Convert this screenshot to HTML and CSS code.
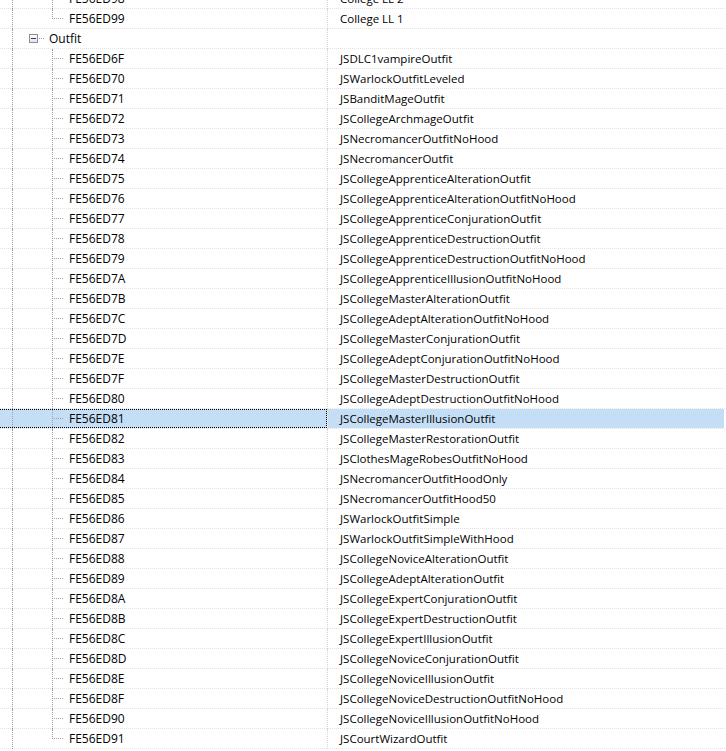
FILE: index.html
```html
<!DOCTYPE html>
<html>
<head>
<meta charset="utf-8">
<link rel="stylesheet" href="styles.css">
</head>
<body>
<div class="tree">
  <div class="row"><div class="c1"><i class="g"></i><i class="s"></i><i class="t"></i><span class="id">FE56ED98</span></div><div class="c2">College LL 2</div></div>
  <div class="row"><div class="c1"><i class="g"></i><i class="s"></i><i class="t l"></i><span class="id">FE56ED99</span></div><div class="c2">College LL 1</div></div>
  <div class="row"><div class="c1"><i class="g"></i><i class="b"><b class="box"></b></i><span class="grp">Outfit</span></div><div class="c2"></div></div>
  <div class="row"><div class="c1"><i class="g"></i><i class="s"></i><i class="t"></i><span class="id">FE56ED6F</span></div><div class="c2">JSDLC1vampireOutfit</div></div>
  <div class="row"><div class="c1"><i class="g"></i><i class="s"></i><i class="t"></i><span class="id">FE56ED70</span></div><div class="c2">JSWarlockOutfitLeveled</div></div>
  <div class="row"><div class="c1"><i class="g"></i><i class="s"></i><i class="t"></i><span class="id">FE56ED71</span></div><div class="c2">JSBanditMageOutfit</div></div>
  <div class="row"><div class="c1"><i class="g"></i><i class="s"></i><i class="t"></i><span class="id">FE56ED72</span></div><div class="c2">JSCollegeArchmageOutfit</div></div>
  <div class="row"><div class="c1"><i class="g"></i><i class="s"></i><i class="t"></i><span class="id">FE56ED73</span></div><div class="c2">JSNecromancerOutfitNoHood</div></div>
  <div class="row"><div class="c1"><i class="g"></i><i class="s"></i><i class="t"></i><span class="id">FE56ED74</span></div><div class="c2">JSNecromancerOutfit</div></div>
  <div class="row"><div class="c1"><i class="g"></i><i class="s"></i><i class="t"></i><span class="id">FE56ED75</span></div><div class="c2">JSCollegeApprenticeAlterationOutfit</div></div>
  <div class="row"><div class="c1"><i class="g"></i><i class="s"></i><i class="t"></i><span class="id">FE56ED76</span></div><div class="c2">JSCollegeApprenticeAlterationOutfitNoHood</div></div>
  <div class="row"><div class="c1"><i class="g"></i><i class="s"></i><i class="t"></i><span class="id">FE56ED77</span></div><div class="c2">JSCollegeApprenticeConjurationOutfit</div></div>
  <div class="row"><div class="c1"><i class="g"></i><i class="s"></i><i class="t"></i><span class="id">FE56ED78</span></div><div class="c2">JSCollegeApprenticeDestructionOutfit</div></div>
  <div class="row"><div class="c1"><i class="g"></i><i class="s"></i><i class="t"></i><span class="id">FE56ED79</span></div><div class="c2">JSCollegeApprenticeDestructionOutfitNoHood</div></div>
  <div class="row"><div class="c1"><i class="g"></i><i class="s"></i><i class="t"></i><span class="id">FE56ED7A</span></div><div class="c2">JSCollegeApprenticeIllusionOutfitNoHood</div></div>
  <div class="row"><div class="c1"><i class="g"></i><i class="s"></i><i class="t"></i><span class="id">FE56ED7B</span></div><div class="c2">JSCollegeMasterAlterationOutfit</div></div>
  <div class="row"><div class="c1"><i class="g"></i><i class="s"></i><i class="t"></i><span class="id">FE56ED7C</span></div><div class="c2">JSCollegeAdeptAlterationOutfitNoHood</div></div>
  <div class="row"><div class="c1"><i class="g"></i><i class="s"></i><i class="t"></i><span class="id">FE56ED7D</span></div><div class="c2">JSCollegeMasterConjurationOutfit</div></div>
  <div class="row"><div class="c1"><i class="g"></i><i class="s"></i><i class="t"></i><span class="id">FE56ED7E</span></div><div class="c2">JSCollegeAdeptConjurationOutfitNoHood</div></div>
  <div class="row"><div class="c1"><i class="g"></i><i class="s"></i><i class="t"></i><span class="id">FE56ED7F</span></div><div class="c2">JSCollegeMasterDestructionOutfit</div></div>
  <div class="row"><div class="c1"><i class="g"></i><i class="s"></i><i class="t"></i><span class="id">FE56ED80</span></div><div class="c2">JSCollegeAdeptDestructionOutfitNoHood</div></div>
  <div class="row sel"><div class="c1"><i class="g"></i><i class="s"></i><i class="t"></i><span class="id">FE56ED81</span></div><div class="c2">JSCollegeMasterIllusionOutfit</div></div>
  <div class="row"><div class="c1"><i class="g"></i><i class="s"></i><i class="t"></i><span class="id">FE56ED82</span></div><div class="c2">JSCollegeMasterRestorationOutfit</div></div>
  <div class="row"><div class="c1"><i class="g"></i><i class="s"></i><i class="t"></i><span class="id">FE56ED83</span></div><div class="c2">JSClothesMageRobesOutfitNoHood</div></div>
  <div class="row"><div class="c1"><i class="g"></i><i class="s"></i><i class="t"></i><span class="id">FE56ED84</span></div><div class="c2">JSNecromancerOutfitHoodOnly</div></div>
  <div class="row"><div class="c1"><i class="g"></i><i class="s"></i><i class="t"></i><span class="id">FE56ED85</span></div><div class="c2">JSNecromancerOutfitHood50</div></div>
  <div class="row"><div class="c1"><i class="g"></i><i class="s"></i><i class="t"></i><span class="id">FE56ED86</span></div><div class="c2">JSWarlockOutfitSimple</div></div>
  <div class="row"><div class="c1"><i class="g"></i><i class="s"></i><i class="t"></i><span class="id">FE56ED87</span></div><div class="c2">JSWarlockOutfitSimpleWithHood</div></div>
  <div class="row"><div class="c1"><i class="g"></i><i class="s"></i><i class="t"></i><span class="id">FE56ED88</span></div><div class="c2">JSCollegeNoviceAlterationOutfit</div></div>
  <div class="row"><div class="c1"><i class="g"></i><i class="s"></i><i class="t"></i><span class="id">FE56ED89</span></div><div class="c2">JSCollegeAdeptAlterationOutfit</div></div>
  <div class="row"><div class="c1"><i class="g"></i><i class="s"></i><i class="t"></i><span class="id">FE56ED8A</span></div><div class="c2">JSCollegeExpertConjurationOutfit</div></div>
  <div class="row"><div class="c1"><i class="g"></i><i class="s"></i><i class="t"></i><span class="id">FE56ED8B</span></div><div class="c2">JSCollegeExpertDestructionOutfit</div></div>
  <div class="row"><div class="c1"><i class="g"></i><i class="s"></i><i class="t"></i><span class="id">FE56ED8C</span></div><div class="c2">JSCollegeExpertIllusionOutfit</div></div>
  <div class="row"><div class="c1"><i class="g"></i><i class="s"></i><i class="t"></i><span class="id">FE56ED8D</span></div><div class="c2">JSCollegeNoviceConjurationOutfit</div></div>
  <div class="row"><div class="c1"><i class="g"></i><i class="s"></i><i class="t"></i><span class="id">FE56ED8E</span></div><div class="c2">JSCollegeNoviceIllusionOutfit</div></div>
  <div class="row"><div class="c1"><i class="g"></i><i class="s"></i><i class="t"></i><span class="id">FE56ED8F</span></div><div class="c2">JSCollegeNoviceDestructionOutfitNoHood</div></div>
  <div class="row"><div class="c1"><i class="g"></i><i class="s"></i><i class="t"></i><span class="id">FE56ED90</span></div><div class="c2">JSCollegeNoviceIllusionOutfitNoHood</div></div>
  <div class="row"><div class="c1"><i class="g"></i><i class="s"></i><i class="t l"></i><span class="id">FE56ED91</span></div><div class="c2">JSCourtWizardOutfit</div></div>
</div>
</body>
</html>
```
FILE: styles.css
```css
html, body {
  margin: 0;
  padding: 0;
  background: #ffffff;
  overflow: hidden;
}

.tree {
  margin-top: -11px;
  width: 726px;
  font-family: "Open Sans", "Noto Sans", sans-serif;
  font-size: 12px;
  color: #000000;
}

.row {
  display: flex;
  height: 20px;
  background-image: repeating-linear-gradient(to right, #e3e3e3 0 1px, transparent 1px 2px);
  background-position: 0 19px;
  background-size: 100% 1px;
  background-repeat: no-repeat;
}

.c1 {
  position: relative;
  flex: none;
  width: 327px;
  height: 20px;
  box-sizing: border-box;
  padding-left: 2px;
  display: flex;
  align-items: flex-start;
}

.c2 {
  flex: 1;
  height: 20px;
  box-sizing: border-box;
  border-left: 1px dotted #d6d6d6;
  padding-left: 12px;
  font-size: 11.5px;
  line-height: 19px;
  white-space: nowrap;
}

.g, .s, .t, .b {
  position: relative;
  flex: none;
  display: block;
  width: 20px;
  height: 20px;
}

/* vertical guide lines (full height) */
.g::before,
.t::before {
  content: "";
  position: absolute;
  left: 10px;
  top: 0;
  height: 20px;
  border-left: 1px dotted #a0a0a0;
}

/* last child: vertical reaches only to the connector */
.l::before {
  height: 10px;
}

/* horizontal connector to the node text */
.t::after {
  content: "";
  position: absolute;
  left: 12px;
  top: 9px;
  width: 9px;
  border-top: 1px dotted #a0a0a0;
}

/* expand/collapse button slot */
.b::after {
  content: "";
  position: absolute;
  left: 17px;
  top: 9px;
  width: 5px;
  border-top: 1px dotted #a0a0a0;
}

.box {
  position: absolute;
  left: 7px;
  top: 5px;
  width: 9px;
  height: 9px;
  box-sizing: border-box;
  border: 1px solid #8f8f8f;
  background: linear-gradient(#ffffff, #e4e4e4);
}
.box::after {
  content: "";
  position: absolute;
  left: 1px;
  top: 3px;
  width: 5px;
  height: 1px;
  background: #1c3c8c;
}

.id,
.grp {
  margin-left: 7px;
  line-height: 19px;
  white-space: nowrap;
}

/* selection */
.sel .c1 {
  background-image: linear-gradient(#c4dff5, #c4dff5);
  background-size: 100% 19px;
  background-repeat: no-repeat;
}
.sel .c2 {
  background-image: linear-gradient(#c4dff5, #c4dff5);
  background-size: calc(100% - 2px) 19px;
  background-position: 0 0;
  background-repeat: no-repeat;
}
.sel .c1::after {
  content: "";
  position: absolute;
  left: -1px;
  top: 0;
  width: 328px;
  height: 19px;
  box-sizing: border-box;
  border: 1px dotted #000000;
}
```
